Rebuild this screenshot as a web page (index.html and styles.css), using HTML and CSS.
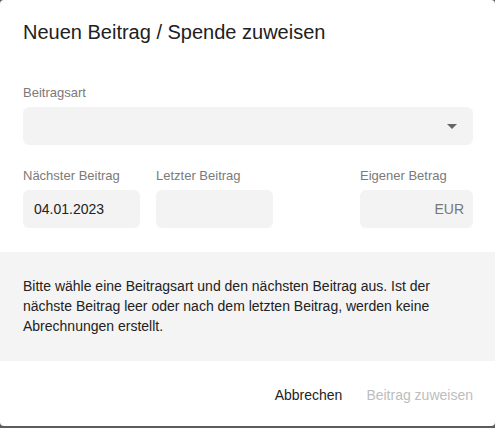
FILE: index.html
```html
<!DOCTYPE html>
<html lang="de">
<head>
    <meta charset="UTF-8">
    <title>Neuen Beitrag / Spende zuweisen</title>
    <link rel="stylesheet" href="styles.css">
</head>
<body>

    <div class="dialog">
        <h2 class="dialog-title">Neuen Beitrag / Spende zuweisen</h2>

        <div class="dialog-body">
            <div class="field">
                <label>Beitragsart</label>
                <div class="select">
                    <span class="select-arrow"></span>
                </div>
            </div>

            <div class="field-row">
                <div class="field small">
                    <label>Nächster Beitrag</label>
                    <div class="input">04.01.2023</div>
                </div>
                <div class="field small">
                    <label>Letzter Beitrag</label>
                    <div class="input"></div>
                </div>
                <div class="field amount">
                    <label>Eigener Betrag</label>
                    <div class="input suffix">EUR</div>
                </div>
            </div>
        </div>

        <div class="info">
            Bitte wähle eine Beitragsart und den nächsten Beitrag aus. Ist der
            nächste Beitrag leer oder nach dem letzten Beitrag, werden keine
            Abrechnungen erstellt.
        </div>

        <div class="actions">
            <button class="btn">Abbrechen</button>
            <button class="btn disabled" disabled>Beitrag zuweisen</button>
        </div>
    </div>

</body>
</html>
```

FILE: styles.css
```css
body {
    margin: 0;
    padding: 0;
    background-color: #5c5c5c;
    font-family: "Liberation Sans", Arial, sans-serif;
    color: #212121;
}

.dialog {
    width: 495px;
    height: 426px;
    background: #fff;
    border-radius: 4px;
    overflow: hidden;
    display: flex;
    flex-direction: column;
}

.dialog-title {
    margin: 0;
    padding: 20px 23px 0;
    font-size: 20px;
    font-weight: normal;
    line-height: 24px;
    color: #212121;
}

.dialog-body {
    padding: 41px 22px 24px 23px;
}

.field label {
    display: block;
    font-size: 13px;
    line-height: 15px;
    color: #7a7a7a;
    margin-bottom: 7px;
}

.select {
    height: 38px;
    background: #f3f3f3;
    border-radius: 6px;
    position: relative;
}

.select-arrow {
    position: absolute;
    right: 16px;
    top: 17px;
    border-left: 5px solid transparent;
    border-right: 5px solid transparent;
    border-top: 5px solid #666;
}

.field-row {
    display: flex;
    gap: 16px;
    margin-top: 23px;
}

.field.small {
    width: 117px;
}

.field.amount {
    width: 113px;
    margin-left: auto;
}

.input {
    height: 38px;
    background: #f3f3f3;
    border-radius: 6px;
    box-sizing: border-box;
    padding: 0 11px;
    font-size: 14px;
    line-height: 38px;
    color: #222;
}

.input.suffix {
    text-align: right;
    padding-right: 9px;
    color: #777;
}

.info {
    background: #f4f4f4;
    padding: 24px 23px 25px;
    font-size: 14px;
    line-height: 20px;
    color: #222;
}

.actions {
    display: flex;
    justify-content: flex-end;
    gap: 24px;
    padding: 24px 22px 0;
}

.btn {
    background: none;
    border: none;
    padding: 0;
    font-family: inherit;
    font-size: 14px;
    line-height: 20px;
    color: #222;
    cursor: pointer;
}

.btn.disabled {
    color: #bdbdbd;
    cursor: default;
}
```
